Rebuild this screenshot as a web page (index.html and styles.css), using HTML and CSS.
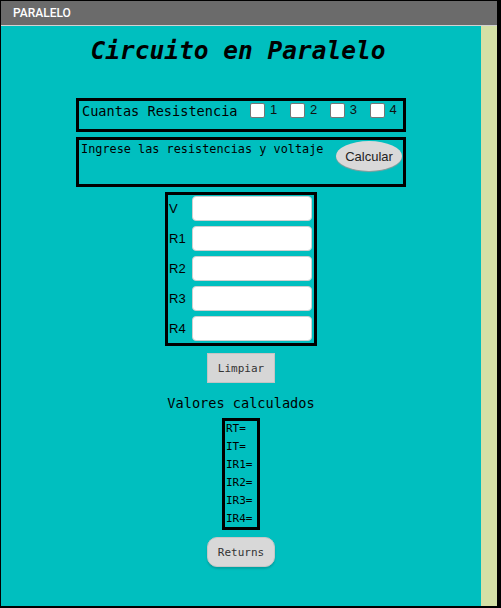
FILE: index.html
```html
<!DOCTYPE html>
<html lang="es">
<head>
<meta charset="utf-8">
<title>PARALELO</title>
<link rel="stylesheet" href="styles.css">
</head>
<body>
<div class="window">
  <div class="titlebar">PARALELO</div>
  <div class="content">
    <main class="main">
      <h1 class="title">Circuito en Paralelo</h1>

      <div class="box count-box">
        <span class="count-label">Cuantas Resistencia</span>
        <label class="check"><input type="checkbox" class="cb"><span class="digit">1</span></label>
        <label class="check"><input type="checkbox" class="cb"><span class="digit">2</span></label>
        <label class="check"><input type="checkbox" class="cb"><span class="digit">3</span></label>
        <label class="check"><input type="checkbox" class="cb"><span class="digit">4</span></label>
      </div>

      <div class="box entry-box">
        <span class="entry-text">Ingrese las resistencias y voltaje</span>
        <button class="btn-calc" type="button">Calcular</button>
      </div>

      <div class="box inputs-box">
        <div class="row"><label class="row-label">V</label><input class="field" type="text"></div>
        <div class="row"><label class="row-label">R1</label><input class="field" type="text"></div>
        <div class="row"><label class="row-label">R2</label><input class="field" type="text"></div>
        <div class="row"><label class="row-label">R3</label><input class="field" type="text"></div>
        <div class="row"><label class="row-label">R4</label><input class="field" type="text"></div>
      </div>

      <button class="btn-clear" type="button">Limpiar</button>

      <div class="results-title">Valores calculados</div>

      <div class="box results-box">
        <div class="result-line first">RT=</div>
        <div class="result-line">IT=</div>
        <div class="result-line">IR1=</div>
        <div class="result-line">IR2=</div>
        <div class="result-line">IR3=</div>
        <div class="result-line">IR4=</div>
      </div>

      <button class="btn-return" type="button">Returns</button>
    </main>
    <aside class="strip"></aside>
  </div>
</div>
</body>
</html>
```

FILE: styles.css
```css
* { box-sizing: border-box; }

html, body {
  margin: 0;
  padding: 0;
  background: #000;
}

.window {
  width: 501px;
  height: 608px;
  border-style: solid;
  border-color: #000;
  border-width: 1px 4px 2px 1px;
  display: flex;
  flex-direction: column;
  background: #00bfbf;
}

.titlebar {
  height: 25px;
  line-height: 24px;
  background: #6b6b6b;
  border-bottom: 1px solid #d2d2d2;
  color: #fff;
  font-family: Roboto, "Liberation Sans", sans-serif;
  font-weight: 500;
  font-size: 12px;
  padding-left: 12px;
  flex: none;
}

.content {
  flex: 1;
  display: flex;
}

.main {
  width: 480px;
  background: #00bfbf;
  display: flex;
  flex-direction: column;
  align-items: center;
}

.strip {
  width: 16px;
  background: #d4e0a6;
}

.title {
  margin: 10px 0 0;
  font-family: "DejaVu Sans Mono", monospace;
  font-style: italic;
  font-weight: bold;
  font-size: 24.5px;
  line-height: 30px;
  color: #000;
  position: relative;
  left: -3px;
}

.box {
  border: 3px solid #000;
}

.count-box {
  margin-top: 32px;
  width: 330px;
  height: 34px;
  display: flex;
  align-items: flex-start;
  padding: 1px 3px 0;
}

.count-label {
  font-family: "DejaVu Sans Mono", monospace;
  font-size: 13.6px;
  line-height: 18px;
  color: #000;
  white-space: pre;
}

.check {
  display: flex;
  align-items: flex-start;
  margin-left: 12.6px;
}

.cb {
  appearance: none;
  -webkit-appearance: none;
  width: 15px;
  height: 15px;
  margin: 1px 0 0;
  background: #fff;
  border: 1px solid #767676;
  border-radius: 2px;
}

.digit {
  margin-left: 5px;
  font-family: "Liberation Sans", Arial, sans-serif;
  font-size: 13px;
  line-height: 15px;
  color: #111;
}

.entry-box {
  margin-top: 5px;
  width: 330px;
  height: 50px;
  display: flex;
  justify-content: space-between;
  align-items: flex-start;
  padding: 0 1px 0 2px;
}

.entry-text {
  margin-top: 2px;
  font-family: "DejaVu Sans Mono", monospace;
  font-size: 11.85px;
  line-height: 15px;
  color: #000;
  white-space: pre;
}

.btn-calc {
  margin-top: 1px;
  width: 66px;
  height: 30px;
  border: none;
  border-radius: 50%;
  background: #d9d9d9;
  box-shadow: 0 1px 1px #9a9a9a;
  font-family: "Liberation Sans", Arial, sans-serif;
  font-size: 13px;
  color: #222;
  padding: 0;
}

.inputs-box {
  margin-top: 5px;
  width: 152px;
  height: 154px;
  padding: 1px 2px 2px 1px;
  display: flex;
  flex-direction: column;
  gap: 5px;
}

.row {
  display: flex;
  align-items: center;
  height: 25px;
}

.row-label {
  width: 23px;
  font-family: "Liberation Sans", Arial, sans-serif;
  font-size: 13px;
  color: #000;
}

.field {
  width: 120px;
  height: 25px;
  margin: 0;
  border: 1px solid #cfcfcf;
  border-radius: 4px;
  background: #fff;
  padding: 0 4px;
}

.btn-clear {
  margin-top: 7px;
  width: 68px;
  height: 30px;
  background: #d6d6d6;
  border: 1px solid #c4c4c4;
  border-radius: 0;
  font-family: "DejaVu Sans Mono", monospace;
  font-size: 11px;
  color: #333;
  padding: 0;
}

.results-title {
  margin-top: 11px;
  font-family: "DejaVu Sans Mono", monospace;
  font-size: 13.6px;
  line-height: 18px;
  color: #000;
  white-space: pre;
}

.results-box {
  margin-top: 6px;
  width: 38px;
  height: 112px;
  padding: 0 0 0 1px;
}

.result-line {
  font-family: "DejaVu Sans Mono", monospace;
  font-size: 11px;
  line-height: 18px;
  color: #000;
  white-space: pre;
}

.result-line.first {
  margin-top: -1px;
}

.btn-return {
  margin-top: 7px;
  width: 68px;
  height: 30px;
  background: #d8d8d8;
  border: 1px solid #c6c6c6;
  border-radius: 10px;
  box-shadow: 0 2px 2px rgba(0, 0, 0, 0.15);
  font-family: "DejaVu Sans Mono", monospace;
  font-size: 11px;
  color: #333;
  padding: 0;
}
```
